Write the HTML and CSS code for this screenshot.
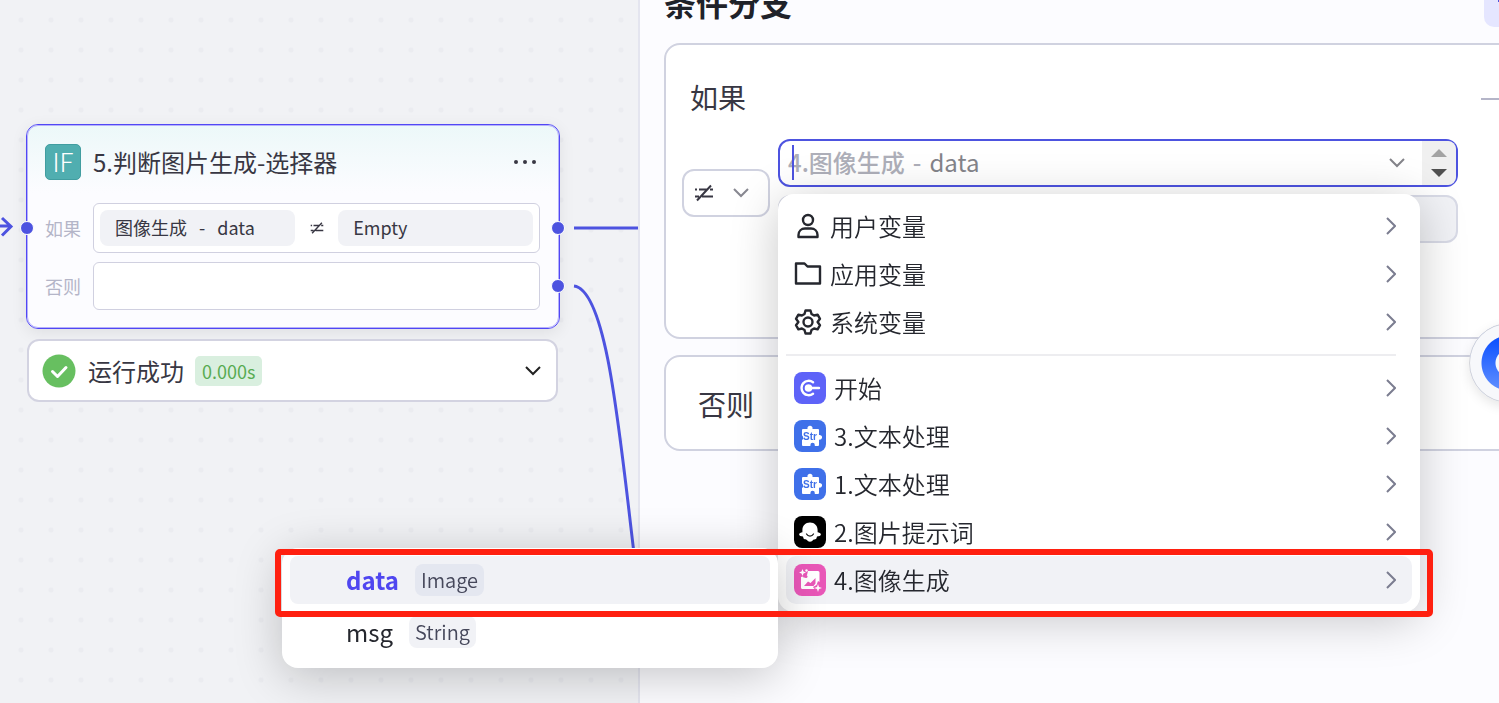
FILE: index.html
```html
<!DOCTYPE html>
<html lang="zh-CN">
<head>
  <meta charset="UTF-8" />
  <meta name="viewport" content="width=device-width, initial-scale=1.0" />
  <title>条件分支</title>
  <link rel="stylesheet" href="styles.css">
</head>
<body>
  <svg class="sprite" aria-hidden="true">
    <symbol id="not-equal" viewBox="0 0 20 18">
      <path d="M1 5.5h2M5 5.5h8M16 5.5h3M1 12.500h4M8 12.500h11M3 16.500L17 1.500" />
    </symbol>
    <symbol id="down" viewBox="0 0 18 12">
      <path d="M2 2l7 7 7-7" />
    </symbol>
    <symbol id="right" viewBox="0 0 10 18">
      <path d="M1 1l8 8-8 8" />
    </symbol>
    <symbol id="puzzle" viewBox="0 0 32 32">
      <path fill="#fff" d="M9 9h4.500a2.600 2.600 0 1 1 5 0H24a1 1 0 0 1 1 1v5a2.400 2.400 0 1 1 0 4.600V25a1 1 0 0 1-1 1h-3.200v-1a2.200 2.200 0 0 0-4.400 0v1H9a1 1 0 0 1-1-1v-5c1.500-.6 1.500-4 0-4.600V10a1 1 0 0 1 1-1z" />
    </symbol>
  </svg>

  <main class="workspace">
    <section class="canvas">
      <svg class="edges" aria-hidden="true">
        <path d="M-8 226H10M2 218l9 8.500-9 9" />
        <path d="M574 228H660" />
        <path d="M574 286C608 290 620 440 636 570" />
      </svg>

      <article class="node">
        <header class="node-head">
          <span class="node-icon">IF</span>
          <h2>5.判断图片生成-选择器</h2>
          <button class="more" aria-label="更多"><i></i><i></i><i></i></button>
        </header>
        <div class="branch">
          <span class="branch-name">如果</span>
          <div class="rule">
            <span class="chip"><span>图像生成</span><span>-</span><span>data</span></span>
            <svg class="rule-op"><use href="#not-equal" /></svg>
            <span class="chip">Empty</span>
          </div>
          <span class="port port-in"></span>
          <span class="port port-out"></span>
        </div>
        <div class="branch">
          <span class="branch-name">否则</span>
          <div class="rule rule-empty"></div>
          <span class="port port-out"></span>
        </div>
      </article>

      <article class="result">
        <svg class="result-icon" viewBox="0 0 34 34"><circle cx="17" cy="17" r="16.500" fill="#67bf60" /><path d="M10.500 17.500l5 5 8.500-9" fill="none" stroke="#fff" stroke-width="3" stroke-linecap="round" stroke-linejoin="round" /></svg>
        <span class="result-text">运行成功</span>
        <span class="result-time">0.000s</span>
        <button class="result-toggle" aria-label="展开"><svg class="down"><use href="#down" /></svg></button>
      </article>
    </section>

    <section class="panel">
      <header class="panel-head">
        <h1>条件分支</h1>
        <button class="add" aria-label="添加分支"><svg viewBox="0 0 20 20"><path d="M0 10h20M10 0v20" /></svg></button>
      </header>

      <div class="card card-if">
        <div class="card-head">
          <h3>如果</h3>
          <button class="remove" aria-label="删除"></button>
        </div>
        <div class="condition">
          <label class="operator">
            <svg class="op"><use href="#not-equal" /></svg>
            <svg class="down"><use href="#down" /></svg>
            <select aria-label="运算符"><option></option></select>
          </label>
          <div class="fields">
            <div class="field field-active">
              <input type="text" role="combobox" aria-label="选择变量" aria-expanded="true">
              <span class="caret"></span>
              <span class="value"><b>4.图像生成</b><b>-</b><span>data</span></span>
              <svg class="down"><use href="#down" /></svg>
              <span class="scroller"><i class="up"></i><i class="dn"></i></span>

              <div class="menu">
                <button class="item">
                  <svg class="line-icon" viewBox="0 0 28 28"><circle cx="14" cy="8" r="5" /><path d="M4.500 25v-2c0-4 3-6.500 6.500-6.500h6c3.500 0 6.500 2.500 6.500 6.500v2z" /></svg>
                  <span>用户变量</span><svg class="right"><use href="#right" /></svg>
                </button>
                <button class="item">
                  <svg class="line-icon" viewBox="0 0 28 28"><path d="M2 23.500V3.500h8.500l3 3H26v17z" /></svg>
                  <span>应用变量</span><svg class="right"><use href="#right" /></svg>
                </button>
                <button class="item">
                  <svg class="line-icon" viewBox="0 0 28 28"><path d="M11.500 2.500h5l1 3.500 2.600 1.500 3.500-.9 2.400 4.200L23.600 14l2.400 3.200-2.400 4.200-3.500-.9-2.600 1.500-1 3.500h-5l-1-3.500-2.600-1.500-3.500.9L2 17.200 4.400 14 2 10.800l2.400-4.200 3.500.9L10.500 6z" /><circle cx="14" cy="14" r="4.500" /></svg>
                  <span>系统变量</span><svg class="right"><use href="#right" /></svg>
                </button>
                <hr>
                <button class="item">
                  <svg class="block-icon start" viewBox="0 0 32 32"><path d="M19 10.200a7.200 7.200 0 1 0 0 11.600" fill="none" stroke="#fff" stroke-width="2.400" stroke-linecap="round" /><circle cx="14.500" cy="16" r="3.800" fill="#fff" /><path d="M15 16h10" stroke="#fff" stroke-width="2.400" stroke-linecap="round" /></svg>
                  <span>开始</span><svg class="right"><use href="#right" /></svg>
                </button>
                <button class="item">
                  <svg class="block-icon text" viewBox="0 0 32 32"><use href="#puzzle" /><text x="16" y="20" text-anchor="middle">Str</text></svg>
                  <span>3.文本处理</span><svg class="right"><use href="#right" /></svg>
                </button>
                <button class="item">
                  <svg class="block-icon text" viewBox="0 0 32 32"><use href="#puzzle" /><text x="16" y="20" text-anchor="middle">Str</text></svg>
                  <span>1.文本处理</span><svg class="right"><use href="#right" /></svg>
                </button>
                <button class="item">
                  <svg class="block-icon llm" viewBox="0 0 32 32"><path fill="#fff" d="M16 6.500c4.600 0 7.600 3.200 7.600 7.500v2.200c1.500.5 3.200.6 3.300 2 .1 1.500-2 2.200-3.900 2.200-.4 1.500-.6 2.600-1.800 2.900-1 .3-1.600.1-2.200.8-.7.9-1.500 1.700-3 1.700s-2.300-.8-3-1.700c-.6-.7-1.200-.5-2.200-.8-1.200-.3-1.400-1.400-1.800-2.900-1.900 0-4-.7-3.900-2.200.1-1.400 1.800-1.500 3.300-2V14c0-4.300 3-7.500 7.600-7.500z" /><path d="M12.500 18c1.500 2.800 5.500 2.800 7 0" fill="none" stroke="#222" stroke-width="1.300" stroke-linecap="round" /></svg>
                  <span>2.图片提示词</span><svg class="right"><use href="#right" /></svg>
                </button>
                <button class="item item-open">
                  <svg class="block-icon image" viewBox="0 0 32 32"><path fill="#fff" d="M14 7h10a1.500 1.500 0 0 1 1.500 1.500V18l-1.500-1-1.500 4L19 23l1.500 2H8.500A1.500 1.500 0 0 1 7 23.500V13l2-.5 1 1.500 3-3z" /><path fill="#fff" d="M8.500 5l1 2.500L12 8.500l-2.500 1-1 2.500-1-2.500L5 8.500l2.500-1zM24 20l1 3 3 1-3 1-1 3-1-3-3-1 3-1z" /><circle cx="12.500" cy="6.500" r="1.200" fill="#fff" /><circle cx="12" cy="12.500" r="1.500" fill="#e957b8" /><path fill="#e957b8" d="M10 22l4-4.500 2.500 1.500 5-5v5.500L19.500 22z" /></svg>
                  <span>4.图像生成</span><svg class="right"><use href="#right" /></svg>
                </button>
                <div class="submenu">
                  <button class="option option-active"><span>data</span><span class="tag">Image</span></button>
                  <button class="option"><span>msg</span><span class="tag">String</span></button>
                </div>
                <div class="highlight"></div>
              </div>
            </div>
            <div class="field field-disabled"></div>
          </div>
        </div>
      </div>

      <div class="card card-else">
        <h3>否则</h3>
      </div>
    </section>
  </main>

  <button class="assistant" aria-label="助手"></button>
</body>
</html>
```
FILE: styles.css
```css
* {
  box-sizing: border-box;
}
body {
  margin: 0;
  height: 100vh;
  overflow: hidden;
  font-family: "Noto Sans CJK SC", sans-serif;
  color: #383743;
}
h1, h2, h3 {
  margin: 0;
}
button {
  padding: 0;
  border: 0;
  background: none;
  font: inherit;
  color: inherit;
  cursor: pointer;
}
svg {
  flex: none;
}
.sprite {
  position: absolute;
  width: 0;
  height: 0;
}
.workspace {
  display: grid;
  grid-template-columns: 638fr 861fr;
  height: 100%;
}

/* canvas */
.canvas {
  position: relative;
  background: #f1f2f5 radial-gradient(circle, #ebecf0 2px, transparent 3px) 6px 5px / 30px 30px;
}
.edges {
  position: absolute;
  inset: 0;
  width: 100%;
  height: 100%;
  fill: none;
  stroke: #4d53e0;
  stroke-width: 3;
}
.node {
  position: absolute;
  left: 26px;
  top: 124px;
  width: 534px;
  height: 205px;
  padding: 18px 19px 18px 18px;
  border: 1px solid #5147f5;
  outline: 1px solid #b5b1fb;
  outline-offset: -2px;
  border-radius: 12px;
  background: linear-gradient(#ecf8f9, #fcfcff 68px);
  box-shadow: 0 4px 16px rgba(0, 0, 0, 0.08);
}
.node-head {
  display: flex;
  align-items: center;
  height: 38px;
  margin-bottom: 22px;
}
.node-icon {
  width: 36px;
  height: 36px;
  border: 1px solid #419da0;
  border-radius: 5px;
  background: #50aeb0;
  color: #fff;
  font-size: 26px;
  font-weight: 300;
  line-height: 32px;
  text-align: center;
}
.node-head h2 {
  flex: 1;
  margin-left: 12px;
  font-size: 24px;
  font-weight: 400;
  line-height: 36px;
}
.more {
  display: flex;
  gap: 5px;
  padding: 4px;
}
.more i {
  width: 4px;
  height: 4px;
  border-radius: 50%;
  background: #383743;
}
.branch {
  position: relative;
  display: flex;
  align-items: center;
  margin-bottom: 9px;
}
.branch-name {
  width: 48px;
  font-size: 18px;
  color: #b4b5c8;
}
.rule {
  flex: 1;
  display: flex;
  align-items: center;
  justify-content: space-between;
  height: 50px;
  padding: 0 6px;
  border: 1px solid #d0d0e0;
  border-radius: 6px;
  background: #fff;
}
.rule-empty {
  height: 48px;
}
.chip {
  flex: 0 0 45%;
  display: flex;
  gap: 12px;
  padding: 0 0 2px 15px;
  border-radius: 8px;
  background: #f1f2f6;
  font-size: 18px;
  line-height: 34px;
}
.rule-op {
  width: 14px;
  height: 14px;
  stroke: #383743;
  stroke-width: 2;
}
.port {
  position: absolute;
  top: 50%;
  width: 14px;
  height: 14px;
  margin-top: -7px;
  border: 1px solid #fff;
  border-radius: 50%;
  background: #4d53e0;
}
.port-in {
  left: -25px;
}
.port-out {
  right: -25px;
}
.result {
  position: absolute;
  left: 27px;
  top: 339px;
  width: 531px;
  height: 63px;
  display: flex;
  align-items: center;
  padding: 0 14px 0 13px;
  border: 2px solid #d3d3e1;
  border-radius: 12px;
  background: #fff;
}
.result-icon {
  width: 34px;
  height: 34px;
}
.result-text {
  margin: 0 11px 0 12px;
  font-size: 24px;
}
.result-time {
  padding: 0 7px;
  border-radius: 5px;
  background: #d9efdf;
  color: #58ab52;
  font-size: 18px;
  line-height: 30px;
}
.result-toggle {
  margin-left: auto;
  color: #222;
}
.down {
  display: block;
  width: 18px;
  height: 12px;
  fill: none;
  stroke: currentColor;
  stroke-width: 2;
}

/* settings panel */
.panel {
  position: relative;
  min-width: 0;
  padding-left: 24px;
  border-left: 2px solid #e4e5ef;
  background: #fcfcff;
}
.panel-head {
  display: flex;
  justify-content: space-between;
  margin: -21px -33px 16px 0;
}
.panel-head h1 {
  color: #1f2229;
  font-size: 32px;
  line-height: 46px;
}
.add {
  width: 48px;
  height: 48px;
  border-radius: 10px;
  background: #e5e6ff;
}
.add svg {
  width: 20px;
  height: 20px;
  stroke: #4d53e0;
  stroke-width: 2;
}
.card {
  margin-right: -40px;
  border: 2px solid #d0d2e0;
  border-radius: 16px;
  background: #fff;
}
.card h3 {
  font-size: 28px;
  font-weight: 400;
  line-height: 40px;
}
.card-if {
  padding: 32px 0 94px;
}
.card-head {
  display: flex;
  align-items: center;
  justify-content: space-between;
  padding: 0 28px 0 24px;
}
.remove {
  width: 28px;
  height: 2px;
  margin-top: 4px;
  background: #b4b5c8;
}
.condition {
  display: flex;
  align-items: center;
  gap: 8px;
  margin: 22px 79px 0 16px;
}
.operator {
  position: relative;
  display: flex;
  align-items: center;
  justify-content: space-between;
  width: 88px;
  height: 48px;
  margin-top: 4px;
  padding: 0 18px 0 10px;
  border: 2px solid #d0d2e0;
  border-radius: 12px;
  color: #888891;
}
.operator select {
  position: absolute;
  inset: 0;
  width: 100%;
  border: 0;
  background: transparent;
  appearance: none;
}
.op {
  width: 20px;
  height: 18px;
  stroke: #383743;
  stroke-width: 2;
}
.fields {
  flex: 1;
  display: grid;
  gap: 8px;
}
.field {
  position: relative;
  display: flex;
  align-items: center;
  height: 48px;
  border: 2px solid #d8dae6;
  border-radius: 12px;
}
.field-active {
  z-index: 2;
  padding-left: 8px;
  border-color: #4d53e0;
  color: #84848a;
}
.field-active input {
  position: absolute;
  inset: 0;
  width: 95%;
  border: 0;
  outline: 0;
  background: transparent;
}
.field-disabled {
  background: #f1f2f6;
}
.caret {
  position: absolute;
  left: 12px;
  top: 4px;
  width: 2px;
  height: 35px;
  background: #4d53e0;
}
.value {
  flex: 1;
  display: flex;
  gap: 8px;
  font-size: 24px;
  line-height: 34px;
  padding-bottom: 2px;
}
.value b {
  color: #aeafb9;
  font-weight: 500;
}
.scroller {
  display: flex;
  flex-direction: column;
  align-items: center;
  justify-content: space-between;
  width: 34px;
  height: 44px;
  margin-left: 16px;
  padding: 8px 0;
  border-radius: 0 8px 8px 0;
  background: #f0f0f0;
}
.up, .dn {
  border: 8px solid transparent;
}
.up {
  border-top: 0;
  border-bottom-color: #a3a3a3;
}
.dn {
  border-bottom: 0;
  border-top-color: #505050;
}

/* variable menu */
.menu {
  position: absolute;
  left: -2px;
  right: 36px;
  top: 53px;
  padding: 8px;
  border-radius: 16px;
  background: #fff;
  color: #25272e;
  box-shadow: 0 8px 48px rgba(0, 0, 0, 0.22);
}
.menu hr {
  height: 2px;
  margin: 8px 16px 8px 0;
  border: 0;
  background: #ededf0;
}
.item {
  display: flex;
  align-items: center;
  gap: 8px;
  width: 100%;
  height: 48px;
  padding: 0 16px 0 8px;
  border-radius: 10px;
  font-size: 24px;
  font-weight: 350;
  line-height: 36px;
  text-align: left;
}
.item span {
  flex: 1;
}
.item-open {
  background: #f1f2f6;
}
.right {
  width: 10px;
  height: 18px;
  fill: none;
  stroke: #7b7d90;
  stroke-width: 2;
}
.line-icon {
  width: 28px;
  height: 28px;
  fill: none;
  stroke: #25272e;
  stroke-width: 2.4;
  stroke-linejoin: round;
}
.block-icon {
  width: 32px;
  height: 32px;
  border-radius: 8px;
}
.start {
  background: #5e63f8;
}
.text {
  background: #3f70e9;
  fill: #3f70e9;
  font-family: "Liberation Sans", sans-serif;
  font-size: 10px;
  font-weight: bold;
}
.llm {
  background: #000;
}
.image {
  background: #e957b8;
}
.submenu {
  position: absolute;
  right: 100%;
  bottom: -56px;
  width: 496px;
  padding: 8px 8px 12px;
  border-radius: 16px;
  background: #fff;
  box-shadow: 0 8px 48px rgba(0, 0, 0, 0.22);
}
.option {
  display: flex;
  align-items: center;
  gap: 16px;
  width: 100%;
  height: 48px;
  margin-bottom: 4px;
  padding-left: 56px;
  border-radius: 8px;
  font-size: 24px;
  font-weight: 400;
  line-height: 36px;
}
.option:last-child {
  margin-bottom: 0;
}
.option-active {
  background: #f1f2f6;
  color: #4f46f0;
  font-weight: 700;
}
.tag {
  padding: 0 6px;
  border-radius: 8px;
  background: #f1f2f6;
  color: #45475a;
  font-size: 20px;
  font-weight: 350;
  line-height: 32px;
}
.option-active .tag {
  background: #e4e7f0;
}
.highlight {
  position: absolute;
  left: -503px;
  right: -13px;
  bottom: -5px;
  height: 68px;
  border: 6px solid #ff2010;
  border-radius: 5px;
  pointer-events: none;
}
.card-else {
  margin-top: 16px;
  padding: 27px 32px 25px;
}
.assistant {
  position: fixed;
  right: -50px;
  top: 323px;
  width: 80px;
  height: 80px;
  border: 1px solid #d4d5da;
  border-radius: 50%;
  background: radial-gradient(circle, #f7f8fb 13px, transparent 14px), radial-gradient(circle, transparent 27px, #f7f8fb 28px), linear-gradient(#0f52ff 20%, #5b8bff 80%);
  box-shadow: 0 4px 12px rgba(0, 0, 0, 0.1);
}
```
